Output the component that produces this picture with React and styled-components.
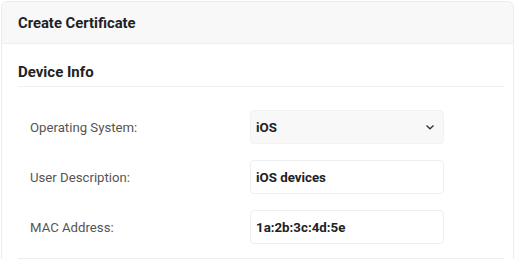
import React from "react";
import styled, { createGlobalStyle } from "styled-components";

const Global = createGlobalStyle`
  html, body { margin: 0; padding: 0; background: #fff; }
  body { font-family: Roboto, "Noto Sans", Arial, sans-serif; }
  * { box-sizing: border-box; }
`;

const Page = styled.div`
  padding: 1px 2px 0 1px;
  height: 259px;
  overflow: hidden;
`;

const Card = styled.section`
  border: 1px solid #ececec;
  border-bottom: none;
  border-radius: 6px 6px 0 0;
  background: #fff;
  height: 300px;
`;

const CardHead = styled.header`
  height: 42px;
  background: #f8f8f8;
  border-bottom: 1px solid #efefef;
  border-radius: 6px 6px 0 0;
  display: flex;
  align-items: center;
  padding: 0 16px;
  font-size: 14.8px;
  font-weight: 700;
  color: #222;
`;

const Body = styled.div`
  padding: 0 9px 0 16px;
`;

const SectionTitle = styled.h2`
  margin: 0;
  height: 43px;
  display: flex;
  align-items: center;
  padding-top: 14px;
  border-bottom: 1px solid #f0f0f0;
  font-size: 15px;
  font-weight: 700;
  color: #222;
`;

const Rows = styled.div`
  display: flex;
  flex-direction: column;
  gap: 16px;
  padding: 23px 0 14px;
  border-bottom: 1px solid #eeeeee;
`;

const Row = styled.div`
  display: grid;
  grid-template-columns: 232px 194px;
  align-items: center;
`;

const Label = styled.label`
  padding-left: 12px;
  font-size: 13.2px;
  color: #555;
`;

const Field = styled.div`
  height: 34px;
  border: 1px solid ${(p) => (p.$select ? "#f2f2f2" : "#efefef")};
  background: ${(p) => (p.$select ? "#f8f8f8" : "#fff")};
  border-radius: 4px;
  display: flex;
  align-items: center;
  justify-content: space-between;
  padding: 0 8px 0 5px;
  font-size: 13.3px;
  font-weight: 700;
  color: #222;
`;

const Chevron = () => (
  <svg width="10" height="10" viewBox="0 0 10 10" fill="none">
    <path d="M1.5 3.5 5 6.8 8.5 3.5" stroke="#333" strokeWidth="1.3" />
  </svg>
);

const fields = [
  { label: "Operating System:", value: "iOS", select: true },
  { label: "User Description:", value: "iOS devices" },
  { label: "MAC Address:", value: "1a:2b:3c:4d:5e" },
];

export default function App() {
  return (
    <Page>
      <Global />
      <Card>
        <CardHead>Create Certificate</CardHead>
        <Body>
          <SectionTitle>Device Info</SectionTitle>
          <Rows>
            {fields.map((f) => (
              <Row key={f.label}>
                <Label>{f.label}</Label>
                <Field $select={f.select}>
                  <span>{f.value}</span>
                  {f.select && <Chevron />}
                </Field>
              </Row>
            ))}
          </Rows>
        </Body>
      </Card>
    </Page>
  );
}
